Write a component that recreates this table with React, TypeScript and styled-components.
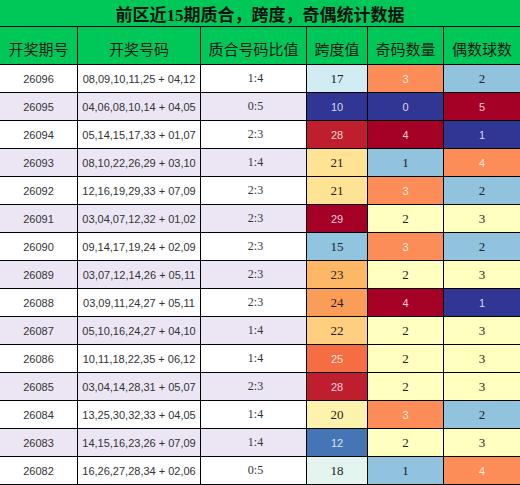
import React from 'react'
import styled, { createGlobalStyle } from 'styled-components'

const GlobalStyle = createGlobalStyle`
  html, body {
    margin: 0;
    padding: 0;
    background: #fff;
  }
`

type Row = [string, string, string, number, number, number]

const rows: Row[] = [
  ['26096', '08,09,10,11,25 + 04,12', '1:4', 17, 3, 2],
  ['26095', '04,06,08,10,14 + 04,05', '0:5', 10, 0, 5],
  ['26094', '05,14,15,17,33 + 01,07', '2:3', 28, 4, 1],
  ['26093', '08,10,22,26,29 + 03,10', '1:4', 21, 1, 4],
  ['26092', '12,16,19,29,33 + 07,09', '2:3', 21, 3, 2],
  ['26091', '03,04,07,12,32 + 01,02', '2:3', 29, 2, 3],
  ['26090', '09,14,17,19,24 + 02,09', '2:3', 15, 3, 2],
  ['26089', '03,07,12,14,26 + 05,11', '2:3', 23, 2, 3],
  ['26088', '03,09,11,24,27 + 05,11', '2:3', 24, 4, 1],
  ['26087', '05,10,16,24,27 + 04,10', '1:4', 22, 2, 3],
  ['26086', '10,11,18,22,35 + 06,12', '1:4', 25, 2, 3],
  ['26085', '03,04,14,28,31 + 05,07', '2:3', 28, 2, 3],
  ['26084', '13,25,30,32,33 + 04,05', '1:4', 20, 3, 2],
  ['26083', '14,15,16,23,26 + 07,09', '1:4', 12, 2, 3],
  ['26082', '16,26,27,28,34 + 02,06', '0:5', 18, 1, 4]
]

// [background, light text]
const spanColors: Record<number, [string, boolean]> = {
  10: ['#313695', true],
  12: ['#4575b4', true],
  15: ['#91c4de', false],
  17: ['#d1ecf3', false],
  18: ['#e4f4ee', false],
  20: ['#fef3ac', false],
  21: ['#fee394', false],
  22: ['#fecf7f', false],
  23: ['#fdb765', false],
  24: ['#f99d59', false],
  25: ['#f46d43', true],
  28: ['#be1e2d', true],
  29: ['#a50026', true]
}

const oddColors: Record<number, [string, boolean]> = {
  0: ['#313695', true],
  1: ['#91c3de', false],
  2: ['#ffffc0', false],
  3: ['#fc8d59', true],
  4: ['#a50026', true]
}

const evenColors: Record<number, [string, boolean]> = {
  1: ['#313695', true],
  2: ['#91c3de', false],
  3: ['#ffffc0', false],
  4: ['#fc8d59', true],
  5: ['#a50026', true]
}

const headers = ['开奖期号', '开奖号码', '质合号码比值', '跨度值', '奇码数量', '偶数球数']

const App: React.FC = () => {
  const heat = (v: number, map: Record<number, [string, boolean]>) => {
    const [bg, light] = map[v]
    return (
      <HeatCell $bg={bg} $light={light}>
        {v}
      </HeatCell>
    )
  }

  return (
    <>
      <GlobalStyle />
      <Table>
        <Title>前区近15期质合，跨度，奇偶统计数据</Title>
        {headers.map((h) => (
          <HeadCell key={h}>{h}</HeadCell>
        ))}
        {rows.map((r, i) => (
          <React.Fragment key={r[0]}>
            <Cell $alt={i % 2 === 1}>{r[0]}</Cell>
            <Cell $alt={i % 2 === 1}>{r[1]}</Cell>
            <RatioCell $alt={i % 2 === 1}>{r[2]}</RatioCell>
            {heat(r[3], spanColors)}
            {heat(r[4], oddColors)}
            {heat(r[5], evenColors)}
          </React.Fragment>
        ))}
      </Table>
    </>
  )
}

const Table = styled.div`
  display: grid;
  width: 520px;
  grid-template-columns: 77px 122px 105px 60px 75px 76px;
  grid-template-rows: 26px 37px;
  grid-auto-rows: 27px;
  gap: 1px;
  padding-bottom: 1px;
  background: #000;
`

const Title = styled.div`
  grid-column: 1 / -1;
  display: flex;
  align-items: center;
  justify-content: center;
  background: #00c858;
  color: #111;
  font-family: 'Liberation Serif', 'Noto Sans CJK SC', serif;
  font-weight: bold;
  font-size: 17px;
  padding-top: 1px;
`

const HeadCell = styled.div`
  display: flex;
  align-items: center;
  justify-content: center;
  padding-top: 6px;
  box-sizing: border-box;
  background: #00c858;
  color: #1a1a1a;
  font-family: 'Noto Sans CJK SC', sans-serif;
  font-size: 15px;
`

const Cell = styled.div<{ $alt: boolean }>`
  display: flex;
  align-items: center;
  justify-content: center;
  background: ${(p) => (p.$alt ? '#ece6f4' : '#fff')};
  color: #333;
  font-family: 'Liberation Sans', Arial, sans-serif;
  font-size: 11px;
`

const RatioCell = styled(Cell)`
  font-family: 'Liberation Serif', serif;
  font-size: 12px;
  padding-left: 4px;
`

const HeatCell = styled.div<{ $bg: string; $light: boolean }>`
  display: flex;
  align-items: center;
  justify-content: center;
  background: ${(p) => p.$bg};
  color: ${(p) => (p.$light ? 'rgba(255, 255, 255, 0.82)' : '#222')};
  font-family: ${(p) => (p.$light ? "'Liberation Sans', sans-serif" : "'Liberation Serif', serif")};
  font-size: ${(p) => (p.$light ? '11px' : '13px')};
`

export default App
